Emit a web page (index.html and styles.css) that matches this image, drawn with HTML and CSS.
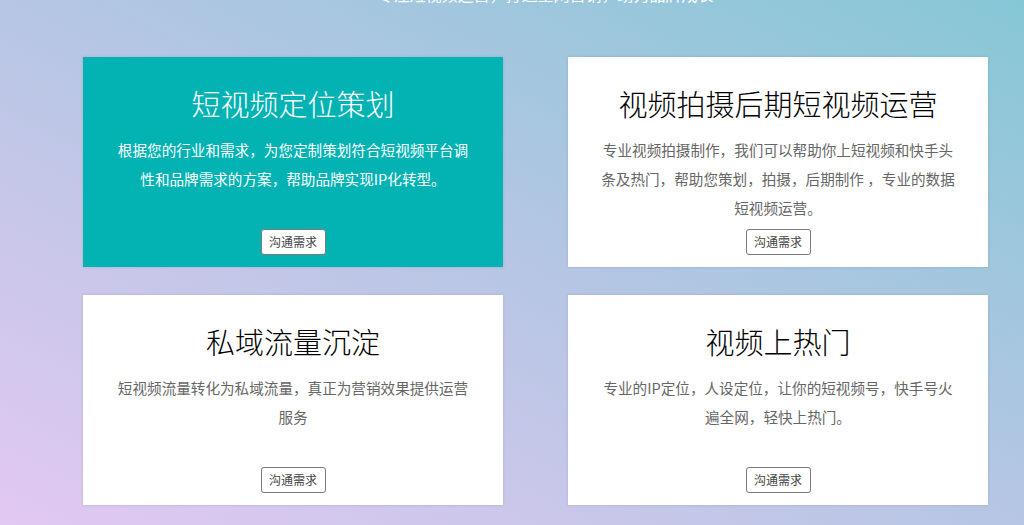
FILE: index.html
```
<!DOCTYPE html>
<html lang="zh-CN">
<head>
<meta charset="UTF-8" />
<title>短视频运营服务</title>
<link rel="stylesheet" href="styles.css">
</head>
<body>

<div id="wrapper">
	<p class="lead">专注短视频运营，打造全网营销，助力品牌成长</p>

	<div class="services">
		<div class="card active">
			<h2>短视频定位策划</h2>
			<p>根据您的行业和需求，为您定制策划符合短视频平台调性和品牌需求的方案，帮助品牌实现IP化转型。</p>
			<a class="btn" href="#">沟通需求</a>
		</div>

		<div class="card">
			<h2>视频拍摄后期短视频运营</h2>
			<p>专业视频拍摄制作，我们可以帮助你上短视频和快手头条及热门，帮助您策划，拍摄，后期制作 ，专业的数据短视频运营。</p>
			<a class="btn" href="#">沟通需求</a>
		</div>

		<div class="card">
			<h2>私域流量沉淀</h2>
			<p>短视频流量转化为私域流量，真正为营销效果提供运营服务</p>
			<a class="btn" href="#">沟通需求</a>
		</div>

		<div class="card">
			<h2>视频上热门</h2>
			<p>专业的IP定位，人设定位，让你的短视频号，快手号火遍全网，轻快上热门。</p>
			<a class="btn" href="#">沟通需求</a>
		</div>
	</div><!-- services -->
</div><!-- wrapper -->

</body>
</html>
```

FILE: styles.css
```
html, body {
	margin: 0;
	height: 100%;
}

body {
	font-family: "Microsoft YaHei", "Noto Sans CJK SC", "Noto Sans", sans-serif;
	background: linear-gradient(to top right, #e2c8f2 0%, #b6c6e4 50%, #86c7d6 100%);
	overflow: hidden;
}

#wrapper {
	width: 905px;
	padding-left: 83px;
}

.lead {
	margin: -16px 0 0;
	font-size: 16px;
	line-height: 20px;
	color: #fff;
	text-align: center;
	padding-left: 20px;
}

.services {
	display: grid;
	grid-template-columns: 420px 420px;
	column-gap: 65px;
	row-gap: 28px;
	margin-top: 53px;
}

.card {
	display: flex;
	flex-direction: column;
	align-items: center;
	height: 210px;
	box-sizing: border-box;
	padding: 26px 0 12px;
	background: #fff;
	box-shadow: 0 0 3px rgba(0, 0, 0, 0.12);
	text-align: center;
}

.card h2 {
	margin: 0;
	font-size: 29px;
	line-height: 40px;
	font-weight: 300;
	color: #000;
}

.card p {
	width: 360px;
	margin: 12px 0 0;
	font-size: 14.6px;
	line-height: 29px;
	color: #666;
}

.card.active {
	background: #03b3b4;
}

.card.active h2,
.card.active p {
	color: #fff;
}

.btn {
	display: block;
	margin-top: auto;
	width: 65px;
	height: 26px;
	box-sizing: border-box;
	border: 1px solid #7a7a7a;
	border-radius: 3px;
	background: #fff;
	font-size: 12px;
	line-height: 24px;
	color: #444;
	text-decoration: none;
}
```
